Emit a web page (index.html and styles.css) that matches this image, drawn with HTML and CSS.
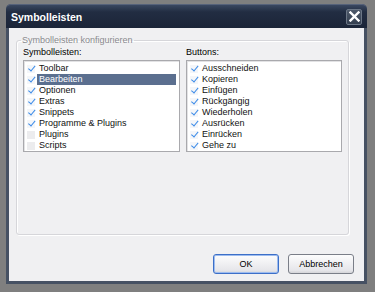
FILE: index.html
```
<!DOCTYPE html>
<html>
<head>
<meta charset="utf-8">
<link rel="stylesheet" href="styles.css">
</head>
<body>
<div class="window">
  <div class="titlebar">
    <span class="title">Symbolleisten</span>
    <span class="close"><svg width="11" height="11" viewBox="0 0 11 11"><path d="M1.5 1.5 L9.5 9.5 M9.5 1.5 L1.5 9.5" stroke="#fff" stroke-width="2.4" stroke-linecap="square"/></svg></span>
  </div>
  <div class="client">
    <fieldset class="group">
      <legend>Symbolleisten konfigurieren</legend>
      <div class="cols">
        <div class="col">
          <div class="label">Symbolleisten:</div>
          <div class="list">
            <div class="row"><span class="cb on"></span><span class="txt">Toolbar</span></div>
            <div class="row sel"><span class="cb on"></span><span class="txt">Bearbeiten</span></div>
            <div class="row"><span class="cb on"></span><span class="txt">Optionen</span></div>
            <div class="row"><span class="cb on"></span><span class="txt">Extras</span></div>
            <div class="row"><span class="cb on"></span><span class="txt">Snippets</span></div>
            <div class="row"><span class="cb on"></span><span class="txt">Programme &amp; Plugins</span></div>
            <div class="row"><span class="cb"></span><span class="txt">Plugins</span></div>
            <div class="row"><span class="cb"></span><span class="txt">Scripts</span></div>
          </div>
        </div>
        <div class="col">
          <div class="label">Buttons:</div>
          <div class="list">
            <div class="row"><span class="cb on"></span><span class="txt">Ausschneiden</span></div>
            <div class="row"><span class="cb on"></span><span class="txt">Kopieren</span></div>
            <div class="row"><span class="cb on"></span><span class="txt">Einfügen</span></div>
            <div class="row"><span class="cb on"></span><span class="txt">Rückgängig</span></div>
            <div class="row"><span class="cb on"></span><span class="txt">Wiederholen</span></div>
            <div class="row"><span class="cb on"></span><span class="txt">Ausrücken</span></div>
            <div class="row"><span class="cb on"></span><span class="txt">Einrücken</span></div>
            <div class="row"><span class="cb on"></span><span class="txt">Gehe zu</span></div>
          </div>
        </div>
      </div>
    </fieldset>
    <div class="buttons">
      <button class="btn default">OK</button>
      <button class="btn">Abbrechen</button>
    </div>
  </div>
</div>
</body>
</html>
```
FILE: styles.css
```
html, body {
  margin: 0;
  padding: 0;
  background: #7f7f7f;
  font-family: "Liberation Sans", Arial, sans-serif;
  font-size: 9px;
}
.window {
  margin: 4px 0 0 6px;
  width: 361px;
  height: 280px;
  background: #465163;
  border-radius: 5px 5px 0 0;
  display: flex;
  flex-direction: column;
  box-sizing: border-box;
  padding: 0 3px 3px 3px;
}
.titlebar {
  height: 24px;
  margin: 0 -3px;
  padding: 0 5px 0 5px;
  border-radius: 5px 5px 0 0;
  background: linear-gradient(#3a4760 0%, #222d42 30%, #1b2538 100%);
  display: flex;
  align-items: center;
  justify-content: space-between;
  border-top: 1px solid #56627a;
  box-sizing: border-box;
}
.title {
  color: #fff;
  font-weight: bold;
  font-size: 10.5px;
  margin-top: 1px;
}
.close {
  width: 16px;
  height: 16px;
  box-sizing: border-box;
  border: 1px solid #6b7686;
  background: linear-gradient(#4d5869, #343f50);
  border-radius: 2px;
  display: flex;
  align-items: center;
  justify-content: center;
}
.client {
  flex: 1;
  background: #f0f0f2;
  display: flex;
  flex-direction: column;
  padding: 0 10px 7px 7px;
}
.group {
  margin: 7px 0 0 0;
  padding: 0 6px 4px 6px;
  border: 1px solid #d6d6da;
  box-shadow: inset 1px 1px 0 #fff, 1px 1px 0 #fff;
  border-radius: 3px;
  height: 200px;
  box-sizing: border-box;
  min-width: 0;
  width: 333px;
}
.group legend {
  color: #8a8a8e;
  padding: 0 1px;
  margin-left: -2px;
  line-height: 11px;
}
.cols {
  display: flex;
  gap: 6px;
  height: 100%;
}
.col {
  display: flex;
  flex-direction: column;
  width: 157px;
}
.col + .col { width: 156px; }
.label {
  color: #000;
  height: 14px;
  line-height: 12px;
}
.list {
  flex: 1;
  background: #fff;
  border: 1px solid #a9a9ad;
  box-shadow: inset 1px 1px 0 #e2e2e4;
  padding: 2px 2px 0 3px;
}
.row {
  height: 11px;
  display: flex;
  align-items: center;
  line-height: 11px;
  color: #111;
}
.cb {
  width: 8px;
  height: 8px;
  background: #ececee;
  margin-right: 4px;
  flex: none;
  position: relative;
}
.cb.on {
  background: #f4f6f9;
}
.cb.on::after {
  content: "";
  position: absolute;
  left: 2.5px;
  top: -0.5px;
  width: 2.5px;
  height: 5.5px;
  border: solid #3a8ae8;
  border-width: 0 1.6px 1.6px 0;
  transform: rotate(40deg);
}
.txt {
  padding: 0 2px;
  margin-left: -2px;
  flex: 1;
}
.row.sel .txt {
  background: #5b6f8f;
  color: #fff;
  margin-right: 1px;
}
.buttons {
  display: flex;
  justify-content: flex-end;
  gap: 9px;
  margin-top: auto;
}
.btn {
  width: 66px;
  height: 20px;
  font-family: "Liberation Sans", Arial, sans-serif;
  font-size: 9px;
  color: #000;
  background: linear-gradient(#fdfdfd, #e6e6ea 85%, #d4d4d8);
  border: 1px solid #7a7e88;
  border-radius: 3px;
  padding: 0;
}
.btn.default {
  border-color: #3c6fc8;
  box-shadow: inset 0 0 0 1px #9dbcef;
}
```
